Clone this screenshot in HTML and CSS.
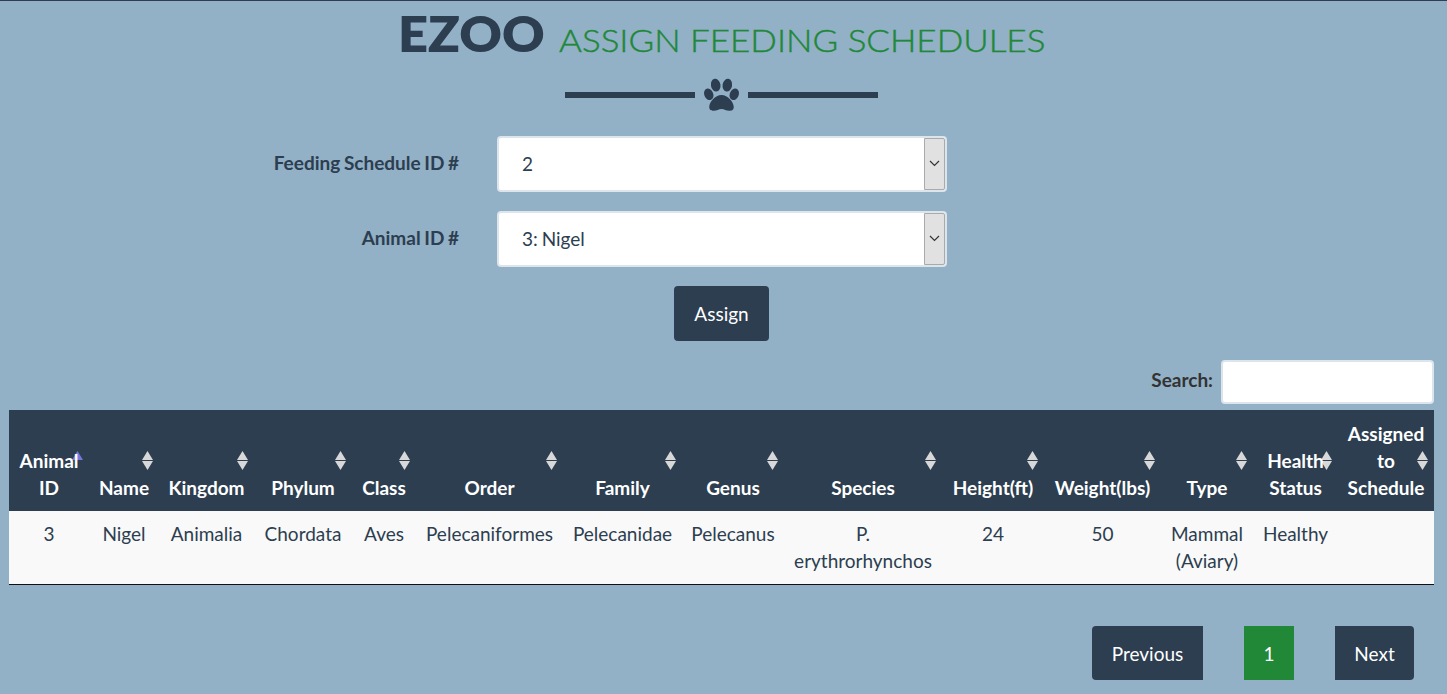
FILE: index.html
```html
<!DOCTYPE html>
<html lang="en">
<head>
<meta charset="utf-8">
<title>eZoo - Assign Feeding Schedules</title>
<link rel="stylesheet" href="styles.css">
</head>
<body>
<header class="title">
  <h1 class="heading"><span class="brand">EZOO</span><span class="subtitle">ASSIGN FEEDING SCHEDULES</span></h1>
  <div class="divider">
    <span class="rule"></span>
    <svg class="paw" viewBox="0 0 36 34" width="36" height="34"><g fill="#2c3e50"><ellipse cx="12" cy="6.9" rx="4.9" ry="6.6" transform="rotate(-10 12 6.9)"/><ellipse cx="24" cy="6.9" rx="4.9" ry="6.6" transform="rotate(10 24 6.9)"/><ellipse cx="4.9" cy="16.3" rx="4.6" ry="6.1" transform="rotate(-22 4.9 16.3)"/><ellipse cx="31.1" cy="16.3" rx="4.6" ry="6.1" transform="rotate(22 31.1 16.3)"/><path d="M18 17C11.5 17 5.4 24.5 5.4 29.3C5.4 32.4 7.5 33.2 10 33.2C13.2 33.2 15.2 31.4 18 31.4C20.8 31.4 22.8 33.2 26 33.2C28.5 33.2 30.6 32.4 30.6 29.3C30.6 24.5 24.5 17 18 17Z"/></g></svg>
    <span class="rule"></span>
  </div>
</header>
<form class="assign-form">
  <div class="field"><label>Feeding Schedule ID #</label>
    <div class="select"><span class="value">2</span><span class="arrow"><svg width="11" height="7" viewBox="0 0 11 7"><path d="M1 1L5.5 5.5L10 1" fill="none" stroke="#333" stroke-width="1.2"/></svg></span></div></div>
  <div class="field"><label>Animal ID #</label>
    <div class="select"><span class="value">3: Nigel</span><span class="arrow"><svg width="11" height="7" viewBox="0 0 11 7"><path d="M1 1L5.5 5.5L10 1" fill="none" stroke="#333" stroke-width="1.2"/></svg></span></div></div>
  <button class="btn assign" type="button">Assign</button>
</form>
<div class="search"><label for="q">Search:</label><input id="q" type="text"></div>
<table class="animals">
  <colgroup><col class="w80"><col class="w70"><col class="w95"><col class="w98"><col class="w64"><col class="w147"><col class="w119"><col class="w102"><col class="w158"><col class="w102"><col class="w117"><col class="w92"><col class="w85"><col class="w96"></colgroup>
  <thead><tr><th class="sorted">Animal ID</th><th>Name</th><th>Kingdom</th><th>Phylum</th><th>Class</th><th>Order</th><th>Family</th><th>Genus</th><th>Species</th><th>Height(ft)</th><th>Weight(lbs)</th><th>Type</th><th>Health Status</th><th>Assigned to Schedule</th></tr></thead>
  <tbody><tr><td>3</td><td>Nigel</td><td>Animalia</td><td>Chordata</td><td>Aves</td><td>Pelecaniformes</td><td>Pelecanidae</td><td>Pelecanus</td><td>P.<br>erythrorhynchos</td><td>24</td><td>50</td><td>Mammal (Aviary)</td><td>Healthy</td><td></td></tr></tbody>
</table>
<nav class="pager"><a class="btn prev">Previous</a><a class="btn current">1</a><a class="btn next">Next</a></nav>
</body>
</html>
```
FILE: styles.css
```css
* { box-sizing: border-box; }
body {
  margin: 0;
  height: 694px;
  overflow: hidden;
  border-top: 1px solid #2c3e50;
  background: #92b0c6;
  color: #2c3e50;
  font: 19px/27.14px Lato, sans-serif;
}
.title { padding-top: 5px; }
.heading {
  display: flex;
  align-items: baseline;
  margin: 0 0 0 398px;
  height: 55px;
  line-height: 55px;
  white-space: nowrap;
}
.brand {
  width: 161px;
  font: 800 49px/55px Lato, sans-serif;
  transform: scaleX(1.07);
  transform-origin: left;
}
.subtitle {
  font: 300 31px/55px Lato, sans-serif;
  color: #218838;
  -webkit-text-stroke: 0.4px #218838;
  transform: scaleX(1.128);
  transform-origin: left;
}
.divider {
  display: flex;
  align-items: center;
  gap: 9px;
  height: 34px;
  margin: 17px 0 0 565px;
}
.rule { width: 130px; height: 6px; background: #2c3e50; }
.paw { display: block; width: 35px; }
.assign-form {
  display: flex;
  flex-direction: column;
  gap: 19px;
  margin-top: 24px;
}
.field { display: flex; align-items: center; gap: 38px; }
.field label {
  width: 459px;
  padding-bottom: 2px;
  text-align: right;
  font-weight: 700;
  word-spacing: -1px;
}
.select {
  display: flex;
  width: 450px;
  height: 56px;
  border: 2px solid #dce4ec;
  border-radius: 4px;
  background: #fff;
}
.value { flex: 1; padding: 12px 0 0 23px; word-spacing: -1px; }
.arrow {
  display: flex;
  align-items: center;
  justify-content: center;
  width: 21px;
  padding-bottom: 1px;
  border: 1px solid #aaa;
  border-radius: 0 2px 2px 0;
  background: #e1e1e1;
}
.btn {
  display: block;
  background: #2c3e50;
  color: #fff;
  font: 19px/27px Lato, sans-serif;
  text-align: center;
  border: 0;
}
.assign {
  width: 95px;
  height: 55px;
  margin-left: 674px;
  border-radius: 4px;
}
.search {
  display: flex;
  justify-content: flex-end;
  gap: 8px;
  margin: 19px 13px 0 0;
}
.search label { padding-top: 6px; font-weight: 700; color: #333; }
.search input {
  width: 213px;
  height: 44px;
  border: 2px solid #dce4ec;
  border-radius: 4px;
  background: #fff;
}
.animals {
  width: 1425px;
  margin: 6px 0 0 9px;
  table-layout: fixed;
  border-collapse: separate;
  border-spacing: 0;
  text-align: center;
}
.w80 { width: 80px; }
.w70 { width: 70px; }
.w95 { width: 95px; }
.w98 { width: 98px; }
.w64 { width: 64px; }
.w147 { width: 147px; }
.w119 { width: 119px; }
.w102 { width: 102px; }
.w158 { width: 158px; }
.w117 { width: 117px; }
.w92 { width: 92px; }
.w85 { width: 85px; }
.w96 { width: 96px; }
.animals th {
  position: relative;
  isolation: isolate;
  height: 101px;
  padding: 9px 8px 10px;
  vertical-align: bottom;
  background: #2c3e50;
  color: #fff;
  font-weight: 700;
}
/* sort arrows sit behind the header text */
.animals th::before, .animals th::after {
  content: "";
  position: absolute;
  z-index: -1;
  right: 6px;
  width: 11px;
  height: 9px;
  background: #d8d8d8;
}
.animals th::before { top: 41px; clip-path: polygon(50% 0, 100% 100%, 0 100%); }
.animals th::after { top: 51px; clip-path: polygon(0 0, 100% 0, 50% 100%); }
.animals .sorted::before { background: #7878dc; }
.animals .sorted::after { display: none; }
.animals td {
  height: 74px;
  padding: 9px 8px 8px;
  vertical-align: top;
  background: #f9f9f9;
  border-bottom: 1px solid #111;
}
.pager {
  display: flex;
  justify-content: flex-end;
  gap: 41px;
  margin: 41px 33px 0 0;
}
.pager .btn { height: 54px; padding-top: 14px; }
.prev { width: 111px; border-radius: 4px 0 0 4px; }
.pager .current { width: 50px; background: #218838; }
.next { width: 79px; border-radius: 0 4px 4px 0; }
```
